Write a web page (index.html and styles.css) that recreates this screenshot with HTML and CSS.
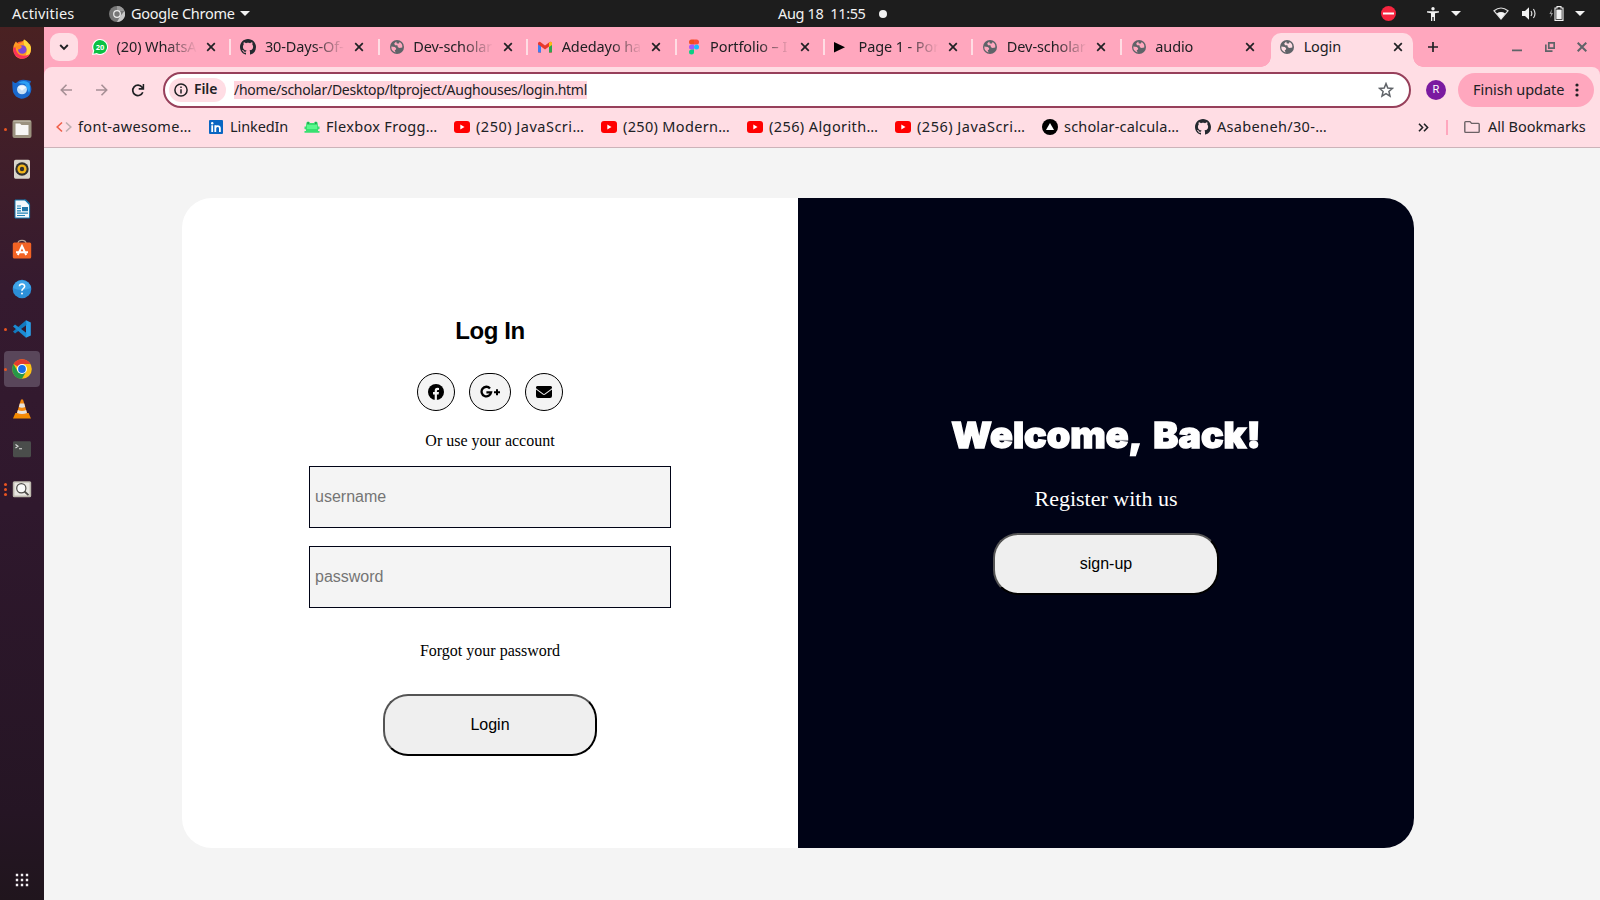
FILE: index.html
```html
<!DOCTYPE html>
<html lang="en">
<head>
<meta charset="utf-8">
<title>Login</title>
<link rel="stylesheet" href="styles.css">
</head>
<body>
<svg width="0" height="0" class="defs">
  <symbol id="globe" viewBox="0 0 14 14"><circle cx="7" cy="7" r="7" fill="#5f6368"/><path d="M6.2 1.4 4.2 3.6 5 5.3H7.4L7.9 7.2 9.6 8.1 12.3 7.6A5.7 5.7 0 0 0 9.6 2L9 3.4H6.8zM1.3 6.6 4.8 7l1.4 1.3-.4 1.5-1.1.5.9 2.2A5.8 5.8 0 0 1 1.3 6.6z" fill="#ffa7be"/></symbol>
  <symbol id="globe-light" viewBox="0 0 14 14"><circle cx="7" cy="7" r="7" fill="#5f6368"/><path d="M6.2 1.4 4.2 3.6 5 5.3H7.4L7.9 7.2 9.6 8.1 12.3 7.6A5.7 5.7 0 0 0 9.6 2L9 3.4H6.8zM1.3 6.6 4.8 7l1.4 1.3-.4 1.5-1.1.5.9 2.2A5.8 5.8 0 0 1 1.3 6.6z" fill="#ffdde4"/></symbol>
  <symbol id="github" viewBox="0 0 16 16"><path fill="#24292f" d="M8 0C3.58 0 0 3.58 0 8c0 3.54 2.29 6.53 5.47 7.59.4.07.55-.17.55-.38 0-.19-.01-.82-.01-1.49-2.01.37-2.53-.49-2.69-.94-.09-.23-.48-.94-.82-1.13-.28-.15-.68-.52-.01-.53.63-.01 1.08.58 1.23.82.72 1.21 1.87.87 2.33.66.07-.52.28-.87.51-1.07-1.78-.2-3.64-.89-3.64-3.95 0-.87.31-1.59.82-2.15-.08-.2-.36-1.02.08-2.12 0 0 .67-.21 2.2.82.64-.18 1.32-.27 2-.27s1.36.09 2 .27c1.53-1.04 2.2-.82 2.2-.82.44 1.1.16 1.92.08 2.12.51.56.82 1.27.82 2.15 0 3.07-1.87 3.75-3.65 3.95.29.25.54.73.54 1.48 0 1.07-.01 1.93-.01 2.2 0 .21.15.46.55.38A8.01 8.01 0 0 0 16 8c0-4.42-3.58-8-8-8z"/></symbol>
  <symbol id="close" viewBox="0 0 10 10"><path d="M1.2 1.2 8.8 8.8M8.8 1.2 1.2 8.8" stroke="#202124" stroke-width="1.7"/></symbol>
  <symbol id="youtube" viewBox="0 0 16 12"><rect width="16" height="12" rx="3" fill="#f00"/><path d="M6.3 3.5 10.5 6 6.3 8.5z" fill="#fff"/></symbol>
  <symbol id="caret" viewBox="0 0 10 5"><path d="M0 0H10L5 5z" fill="#f2f2f2"/></symbol>
</svg>

<header class="topbar">
  <span class="activities">Activities</span>
  <svg class="app-ico" width="16" height="16" viewBox="0 0 16 16"><circle cx="8" cy="8" r="8" fill="#777"/><path d="M8 0a8 8 0 0 1 7.5 5H8z" fill="#999"/><path d="M15.5 5A8 8 0 0 1 8 16l3.4-6z" fill="#c8c8c8"/><circle cx="8" cy="8" r="3.9" fill="#eee"/><circle cx="8" cy="8" r="2.7" fill="#777"/></svg>
  <span class="app-name">Google Chrome</span>
  <svg class="app-caret" width="10" height="5"><use href="#caret"/></svg>
  <span class="clock">Aug 18&nbsp; 11:55</span>
  <span class="notice"></span>
  <div class="tray">
    <svg class="dnd" width="15" height="15" viewBox="0 0 15 15"><circle cx="7.5" cy="7.5" r="7.5" fill="#f5253f"/><rect x="2" y="6.5" width="11" height="2" fill="#fff"/></svg>
    <svg class="person" width="12" height="14" viewBox="0 0 12 14"><circle cx="6" cy="1.8" r="1.7" fill="#f2f2f2"/><path d="M0 4.2H12V5.4L8 6.2V14H6.7V10H5.3V14H4V6.2L0 5.4z" fill="#f2f2f2"/></svg>
    <svg class="caret-a" width="10" height="5"><use href="#caret"/></svg>
    <svg class="wifi" width="16" height="13" viewBox="0 0 16 13"><path d="M1 3.8Q8-1.8 15 3.8L8 12z" fill="none" stroke="#ddd" stroke-width="1.2"/><path d="M3.8 6.4Q8 3.8 12.2 6.4L8 12z" fill="#f5f5f5"/></svg>
    <svg class="sound" width="15" height="13" viewBox="0 0 15 13"><path d="M0 4H3L7 .3V12.7L3 9H0z" fill="#f2f2f2"/><path d="M9 4Q10.6 6.5 9 9M11.4 2Q14.6 6.5 11.4 11" fill="none" stroke="#ddd" stroke-width="1.2"/></svg>
    <svg class="battery" width="15" height="15" viewBox="0 0 15 15"><path d="M3 3 .4 8H2.1L1.4 12 4 7H2.3z" fill="#999"/><path d="M6 2H8V.6H12V2H14V14.4H6z" fill="none" stroke="#f2f2f2" stroke-width="1.1"/><rect x="7.3" y="3.6" width="5.4" height="9.4" fill="#f2f2f2"/></svg>
    <svg width="10" height="5"><use href="#caret"/></svg>
  </div>
</header>

<div class="desktop">
<nav class="dock">
  <div class="app"><svg viewBox="0 0 20 20"><circle cx="10" cy="11" r="8.8" fill="#ff5a30"/><path d="M1.5 7Q3 3 4 2.5L6 5Q10 4 11 2L12 .5Q16 3 16 6L18 5Q20 12 17 16 13 20 8 19.5 1 17 1.5 7z" fill="#ff9a24"/><path d="M12 .5Q18 4 19 9 19 17 12 19 16 14 14 9 11 6 12 .5z" fill="#ffd83c"/><path d="M1.3 9Q1 18 9 19.7 15 20 18 15 13 18 8 16 4 14 3.5 8z" fill="#f9325c"/><circle cx="10.3" cy="10.5" r="4.3" fill="#7a48d8"/><path d="M3 7.5Q8 5 10 8L8 10 6 10.5z" fill="#ff8a20"/></svg></div>
  <div class="app"><svg viewBox="0 0 20 20"><path d="M.5 2Q2.5 4.5 4 4 8-.5 14 1L19 2 18 5Q21 11 17.5 16 13.5 20 9 19.7 3 18.5 1 13 0 6 .5 2z" fill="#1968cc"/><path d="M6 4Q12 0 17 4 19 9 17 14L13 5z" fill="#2da1f5"/><ellipse cx="10" cy="10.5" rx="5" ry="4.8" fill="#c5dff6"/><path d="M5.8 8.2 10 11.8 14.2 8.2Q10 5 5.8 8.2z" fill="#f2f8fd"/></svg></div>
  <div class="app run"><svg viewBox="0 0 20 20"><rect x=".5" y="1" width="19" height="18" rx="2" fill="#9b927f"/><rect x="1.4" y="1.8" width="17.2" height="1" fill="#bdb6a7"/><path d="M3.5 4.5H8L9.5 6H16.5V16H3.5z" fill="#f7f6f4"/></svg></div>
  <div class="app"><svg viewBox="0 0 20 20"><rect x="2" y=".7" width="16" height="19" rx="1.6" fill="#d9d5cc"/><circle cx="10" cy="10" r="6.7" fill="#303030"/><circle cx="10" cy="10" r="4.6" fill="#f1b51c"/><circle cx="10" cy="10" r="2.2" fill="#333"/></svg></div>
  <div class="app"><svg viewBox="0 0 20 20"><path d="M3 1H13L17.6 5.6V19H3z" fill="#f3f8fb" stroke="#1678ae" stroke-width="1"/><path d="M12 .6H14L18 4.6V7z" fill="#1678ae"/><path d="M5 7H9M5 9.4H9M5 11.8H9M5 14.2H16M5 16.5H13" stroke="#2283b6" stroke-width="1.2"/><rect x="10" y="8" width="6" height="4.2" fill="#2276a8"/></svg></div>
  <div class="app"><svg viewBox="0 0 20 20"><path d="M6 4.5Q6 1.3 10 1.3T14 4.5" fill="none" stroke="#b8a393" stroke-width="1.3"/><rect x=".8" y="3.5" width="18.4" height="16" rx="1.6" fill="#f26324"/><path d="M5.8 16 10 7 14.2 16M4 13.3H16" fill="none" stroke="#fff" stroke-width="2"/></svg></div>
  <div class="app"><svg viewBox="0 0 20 20"><circle cx="10" cy="10" r="9.3" fill="#2c8fd8"/><path d="M.9 9A9.2 9.2 0 0 1 19 9Q9 13 .9 9z" fill="#3fa4e8"/><path d="M7.4 7.2Q7.6 5 10 5T12.7 7.3Q12.7 8.6 11.2 9.6T10 12" fill="none" stroke="#fff" stroke-width="1.5"/><circle cx="10" cy="14.6" r="1" fill="#fff"/></svg></div>
  <div class="app run"><svg viewBox="0 0 20 20"><path d="M14 1.2 18.8 3.4V16.6L14 18.8z" fill="#2a9fe8"/><path d="M14 1.2 1 12.6 3 14.5 14.5 6z" fill="#1279be"/><path d="M14 18.8 1 7.4 3 5.5 14.5 14z" fill="#1b8bd2"/></svg></div>
  <div class="app run active"><svg viewBox="0 0 20 20"><circle cx="10" cy="10" r="9.8" fill="#fbc116"/><path d="M10 10 1.5 5.1A9.8 9.8 0 0 1 18.5 5.1H10z" fill="#e33b2e"/><path d="M1.5 5.1A9.8 9.8 0 0 0 10 19.8L14.2 12.5 10 10 5.8 12.5z" fill="#279847"/><circle cx="10" cy="10" r="5" fill="#fff"/><circle cx="10" cy="10" r="3.9" fill="#1a6fe8"/></svg></div>
  <div class="app"><svg viewBox="0 0 20 20"><path d="M3.4 14H16.6L19 19.6H1z" fill="#f48b00"/><path d="M9 .5H11L15.5 15.5Q10 18 4.5 15.5z" fill="#f58910"/><path d="M7.8 4.5H12.2L13.2 8Q10 9.3 6.8 8zM5.9 11Q10 12.8 14.1 11L15 14Q10 16 5 14z" fill="#e6e3df"/></svg></div>
  <div class="app"><svg viewBox="0 0 20 20"><rect x="1" y="2.2" width="18" height="16" rx="1.4" fill="#4a4d4b"/><path d="M3.5 5.5 6 7.3 3.5 9M7 9.8H10" fill="none" stroke="#ddd" stroke-width="1.1"/></svg></div>
  <div class="app run many"><svg viewBox="0 0 20 20"><rect x=".8" y="2.2" width="18.4" height="16" rx="1.5" fill="#bdb9ae"/><rect x="2.4" y="3.6" width="15.2" height="13" fill="#e9e7e2"/><circle cx="9.3" cy="9.2" r="4.6" fill="#f9f9f9" stroke="#4d4b48" stroke-width="1.2"/><path d="M12.5 12.5 16.5 16.2" stroke="#4d4b48" stroke-width="1.8"/></svg></div>
  <svg class="grid-ico" width="14" height="14" viewBox="0 0 14 14" fill="#f4f0f4"><path d="M.8.8h2.4v2.4H.8zM5.8.8h2.4v2.4H5.8zM10.8.8h2.4v2.4h-2.4zM.8 5.8h2.4v2.4H.8zM5.8 5.8h2.4v2.4H5.8zM10.8 5.8h2.4v2.4h-2.4zM.8 10.8h2.4v2.4H.8zM5.8 10.8h2.4v2.4H5.8zM10.8 10.8h2.4v2.4h-2.4z"/></svg>
</nav>

<div class="browser">
  <div class="tabstrip">
    <div class="tab-search"><svg width="10" height="7" viewBox="0 0 10 7"><path d="M1.2 1 5 4.9 8.8 1" fill="none" stroke="#202124" stroke-width="1.9"/></svg></div>
    <div class="tab"><svg class="fav" viewBox="0 0 16 16"><path d="M8 0a8 8 0 1 1-3.5 15.2L0 16l1-4.3A8 8 0 0 1 8 0z" fill="#fff"/><path d="M8 1.1a6.9 6.9 0 1 1-3.3 12.9l-3.2.7.8-3.1A6.9 6.9 0 0 1 8 1.1z" fill="#0ac143"/><text x="8" y="10.6" class="fav-num">20</text></svg><span class="title">(20) WhatsA</span><svg class="x"><use href="#close"/></svg></div>
    <div class="tab"><svg class="fav"><use href="#github"/></svg><span class="title">30-Days-Of-</span><svg class="x"><use href="#close"/></svg></div>
    <div class="tab"><svg class="fav small"><use href="#globe"/></svg><span class="title">Dev-scholar</span><svg class="x"><use href="#close"/></svg></div>
    <div class="tab"><svg class="fav small" viewBox="0 0 14 14"><path d="M0 3V12.4H3V6.5L7 9.5 11 6.5V12.4H14V3Q12.5 1 11 2.5L7 5.6 3 2.5Q1.5 1 0 3z" fill="#e9382c"/><path d="M0 4.5 3 6.6V12.4H1Q0 12.4 0 11.4z" fill="#3f7ff0"/><path d="M14 4.5 11 6.6V12.4H13Q14 12.4 14 11.4z" fill="#2ea44f"/><path d="M11 2.5Q13.5 1 14 3V5L11 7z" fill="#fcbb13"/></svg><span class="title">Adedayo ha</span><svg class="x"><use href="#close"/></svg></div>
    <div class="tab"><svg class="fav" viewBox="0 0 16 16"><path d="M8 .5H5.5a2.5 2.5 0 0 0 0 5H8z" fill="#f24e1e"/><path d="M8 .5h2.5a2.5 2.5 0 0 1 0 5H8z" fill="#ff4a38"/><path d="M8 5.5H5.5a2.5 2.5 0 0 0 0 5H8z" fill="#a259ff"/><circle cx="10.5" cy="8" r="2.5" fill="#1abcfe"/><path d="M8 10.5H5.5A2.5 2.5 0 1 0 8 13z" fill="#0acf83"/></svg><span class="title">Portfolio – I</span><svg class="x"><use href="#close"/></svg></div>
    <div class="tab"><svg class="fav" viewBox="0 0 16 16"><path d="M0 3 11 8.3 0 13.6z" fill="#000"/></svg><span class="title">Page 1 - Por</span><svg class="x"><use href="#close"/></svg></div>
    <div class="tab"><svg class="fav small"><use href="#globe"/></svg><span class="title">Dev-scholar</span><svg class="x"><use href="#close"/></svg></div>
    <div class="tab last"><svg class="fav small"><use href="#globe"/></svg><span class="title">audio</span><svg class="x"><use href="#close"/></svg></div>
    <div class="tab current"><svg class="fav small"><use href="#globe-light"/></svg><span class="title">Login</span><svg class="x"><use href="#close"/></svg></div>
    <svg class="plus" width="12" height="12" viewBox="0 0 12 12"><path d="M6 1V11M1 6H11" stroke="#202124" stroke-width="1.7"/></svg>
    <div class="win-controls">
      <svg width="10" height="10" viewBox="0 0 10 10"><path d="M0 9H10" stroke="#5f6368" stroke-width="2"/></svg>
      <svg width="10" height="10" viewBox="0 0 10 10"><path d="M3.8.8H9.2V6.2H3.8zM.8 2.5V9.2H7.5" fill="none" stroke="#5f6368" stroke-width="1.7"/></svg>
      <svg width="10" height="10" viewBox="0 0 10 10"><path d="M.7.7 9.3 9.3M9.3.7.7 9.3" stroke="#5f6368" stroke-width="2"/></svg>
    </div>
  </div>

  <div class="chrome">
    <div class="toolbar">
      <svg class="nav-btn" width="12" height="12" viewBox="0 0 12 12"><path d="M12 6H1.5M6.5.8 1.3 6 6.5 11.2" fill="none" stroke="#a68f95" stroke-width="1.6"/></svg>
      <svg class="nav-btn" width="12" height="12" viewBox="0 0 12 12"><path d="M0 6H10.5M5.5.8 10.7 6 5.5 11.2" fill="none" stroke="#a68f95" stroke-width="1.6"/></svg>
      <svg class="nav-btn reload" width="13" height="13" viewBox="0 0 13 13"><path d="M11.3 8.2A5.2 5.2 0 1 1 10.6 3.2L11.8 4.6M12 0V4.9H7.2" fill="none" stroke="#202124" stroke-width="1.7"/></svg>
      <div class="omnibox">
        <span class="chip"><svg width="14" height="14" viewBox="0 0 14 14"><circle cx="7" cy="7" r="6.1" fill="none" stroke="#202124" stroke-width="1.5"/><path d="M7 6.2V10.4M7 3.4V5" stroke="#202124" stroke-width="1.5"/></svg><b>File</b></span>
        <span class="url">/home/scholar/Desktop/ltproject/Aughouses/login.html</span>
        <svg class="star" width="16" height="16" viewBox="0 0 16 16"><path d="M8 1.6 9.8 6 14.5 6.4 10.9 9.5 12 14.1 8 11.6 4 14.1 5.1 9.5 1.5 6.4 6.2 6z" fill="none" stroke="#5f6368" stroke-width="1.5"/></svg>
      </div>
      <span class="avatar">R</span>
      <span class="update"><span class="update-text">Finish update</span><svg width="4" height="14" viewBox="0 0 4 14" fill="#202124"><circle cx="2" cy="2" r="1.6"/><circle cx="2" cy="7" r="1.6"/><circle cx="2" cy="12" r="1.6"/></svg></span>
    </div>
    <div class="bookmarks">
      <div class="bm w1"><svg viewBox="0 0 16 16"><path d="M6 3.5 1.2 8 6 12.5" fill="none" stroke="#f0604b" stroke-width="1.6"/><path d="M10 3.5 14.8 8 10 12.5" fill="none" stroke="#bdaeb0" stroke-width="1.6"/></svg><span>font-awesome…</span></div>
      <div class="bm w2"><svg viewBox="0 0 16 16"><rect x="1" y="1" width="14" height="14" rx="1" fill="#0a66c2"/><path d="M4.2 6.3V13M7.3 13V6.3M7.4 9.2Q7.6 7.2 9.7 7.2T11.9 9.4V13" fill="none" stroke="#fff" stroke-width="1.8"/><circle cx="4.2" cy="4.2" r="1.2" fill="#fff"/></svg><span>LinkedIn</span></div>
      <div class="bm w3"><svg viewBox="0 0 16 16"><path d="M2.2 5Q2.2 2.5 4 2.5T6 4H10Q10.2 2.5 12 2.5T13.8 5L14 7.5H15.5V10L14 10.5V12H15.5V13.8H.5V12H2V10.5L.5 10V7.5H2z" fill="#38e070"/><path d="M3 6H13V10H3z" fill="#5cf78d"/><circle cx="4.1" cy="4.1" r=".8" fill="#177a3b"/><circle cx="11.9" cy="4.1" r=".8" fill="#177a3b"/></svg><span>Flexbox Frogg…</span></div>
      <div class="bm w4"><svg viewBox="0 -2 16 16"><use href="#youtube" width="16" height="12"/></svg><span>(250) JavaScri…</span></div>
      <div class="bm w5"><svg viewBox="0 -2 16 16"><use href="#youtube" width="16" height="12"/></svg><span>(250) Modern…</span></div>
      <div class="bm w6"><svg viewBox="0 -2 16 16"><use href="#youtube" width="16" height="12"/></svg><span>(256) Algorith…</span></div>
      <div class="bm w7"><svg viewBox="0 -2 16 16"><use href="#youtube" width="16" height="12"/></svg><span>(256) JavaScri…</span></div>
      <div class="bm w8"><svg viewBox="0 0 16 16"><circle cx="8" cy="8" r="8" fill="#000"/><path d="M8 4 12 11H4z" fill="#fff"/></svg><span>scholar-calcula…</span></div>
      <div class="bm w9"><svg><use href="#github"/></svg><span>Asabeneh/30-…</span></div>
      <svg class="more" width="11" height="9" viewBox="0 0 11 9"><path d="M1 .7 4.6 4.5 1 8.3M6 .7 9.6 4.5 6 8.3" fill="none" stroke="#202124" stroke-width="1.6"/></svg>
      <i class="divider"></i>
      <div class="bm all"><svg viewBox="0 0 16 16"><path d="M.8 3.4Q.8 2.6 1.6 2.6H6L7.6 4.4H14.4Q15.2 4.4 15.2 5.2V12.6Q15.2 13.4 14.4 13.4H1.6Q.8 13.4 .8 12.6z" fill="none" stroke="#6b6165" stroke-width="1.4"/></svg><span>All Bookmarks</span></div>
    </div>
  </div>

  <main class="page">
    <div class="card">
      <section class="login">
        <h2>Log In</h2>
        <div class="social">
          <a><svg width="16" height="16" viewBox="0 0 16 16"><circle cx="8" cy="8" r="8"/><path d="M6.7 16V10.5H5V8H6.7V6.7Q6.7 3.7 9.4 3.7 10.3 3.7 11 3.9V6.1H10Q8.9 6.1 8.9 7.1V8H11L10.6 10.5H8.9V16z" fill="#f4f4f4"/></svg></a>
          <a><svg width="20" height="16" viewBox="0 0 20 16"><path d="M10 4.4A4.8 4.8 0 1 0 11.1 8.4H6.4" fill="none" stroke="#000" stroke-width="2.3"/><path d="M17 5.2V11.2M14 8.2H20" stroke="#000" stroke-width="2"/></svg></a>
          <a><svg width="16" height="16" viewBox="0 0 16 16"><path d="M1.5 2H14.5A1.5 1.5 0 0 1 15.4 4.7L8.6 9.8Q8 10.2 7.4 9.8L.6 4.7A1.5 1.5 0 0 1 1.5 2z"/><path d="M0 5.5 6.8 10.6Q8 11.4 9.2 10.6L16 5.5V12Q16 14 14 14H2Q0 14 0 12z"/></svg></a>
        </div>
        <p class="alt">Or use your account</p>
        <input type="text" placeholder="username">
        <input type="password" placeholder="password">
        <p class="forgot">Forgot your password</p>
        <button>Login</button>
      </section>
      <section class="welcome">
        <h1>Welcome, Back!</h1>
        <p>Register with us</p>
        <button>sign-up</button>
      </section>
    </div>
  </main>
</div>
</div>
</body>
</html>
```
FILE: styles.css
```css
* { box-sizing: border-box; }
body { margin: 0; width: 1600px; height: 900px; overflow: hidden; background: #f4f4f4; font-family: "Noto Sans", "Open Sans", sans-serif; font-size: 14.5px; color: #202124; }
svg { display: block; flex: none; }
.defs { position: absolute; }

.topbar { height: 27px; background: #1d1d1d; color: #f2f2f2; display: flex; align-items: center; padding: 0 15px 0 12px; white-space: nowrap; }
.topbar > span:not(.notice) { height: 22px; line-height: 20px; }
.activities { width: 97px; letter-spacing: .2px; }
.app-ico { margin-right: 6px; }
.app-name { width: 109px; letter-spacing: -.25px; }
.app-caret { margin-right: 528px; }
.clock { width: 101px; letter-spacing: -.35px; }
.notice { width: 8px; height: 8px; border-radius: 50%; background: #f2f2f2; }
.tray { margin-left: auto; display: flex; align-items: center; }
.dnd { margin-right: 31px; }
.person { margin-right: 12px; }
.caret-a { margin-right: 32px; }
.wifi { margin-right: 13px; }
.sound { margin-right: 12px; }
.battery { margin-right: 11px; }

.desktop { display: flex; height: 873px; }
.dock { width: 44px; flex: none; background: linear-gradient(#4a2122 0, #421f28 12%, #351a2f 30%, #2f182d 55%, #251524 90%, #20151d); display: flex; flex-direction: column; align-items: center; padding-top: 4px; }
.app { position: relative; width: 36px; height: 36px; margin-bottom: 4px; display: flex; align-items: center; justify-content: center; border-radius: 4px; }
.app svg { width: 20px; height: 20px; }
.app.active { background: #59465a; }
.app.run::before { content: ""; position: absolute; left: 0; top: 16.5px; width: 3px; height: 3px; border-radius: 50%; background: #e95420; }
.app.many::before { box-shadow: 0 -5px #e95420, 0 5px #e95420; }
.grid-ico { margin-top: auto; margin-bottom: 13px; }

.browser { width: 1556px; display: flex; flex-direction: column; background: #ffa7be; }
.tabstrip { height: 40px; flex: none; display: flex; align-items: center; padding: 0 13px 0 6px; position: relative; }
.tab-search { width: 28px; height: 28px; border-radius: 9px; background: #ffdde4; margin-right: 6px; display: flex; align-items: center; justify-content: center; }
.tab { width: 148.4px; height: 34px; flex: none; display: flex; align-items: center; padding-left: 8px; position: relative; }
.tab::after { content: ""; position: absolute; right: 1px; top: 9px; width: 2px; height: 16px; background: #ffdde4; }
.tab.last::after { display: none; }
.fav { width: 16px; height: 16px; margin-right: 8.5px; }
.fav.small { width: 14px; height: 14px; margin: 0 9.5px 0 1px; }
.fav-num { font: bold 7.5px "Open Sans", sans-serif; fill: #fff; text-anchor: middle; }
.title { width: 80px; white-space: nowrap; height: 24px; line-height: 22px; letter-spacing: -.1px; -webkit-mask-image: linear-gradient(90deg, #000 60%, transparent); mask-image: linear-gradient(90deg, #000 60%, transparent); }
.x { width: 10px; height: 10px; margin-left: 9.5px; }
.tab.current { width: 142px; align-self: flex-end; background: #ffdde4; border-radius: 10px 10px 0 0; }
.tab.current .x { margin-left: 9px; }
.tab.current .title { -webkit-mask-image: none; mask-image: none; }
.tab.current .title, .tab.current .fav, .tab.current .x { transform: translateY(-3px); }
.tab.current::before { content: ""; position: absolute; left: -10px; bottom: 0; width: 10px; height: 10px; background: radial-gradient(circle at 0 0, transparent 9.5px, #ffdde4 10px); }
.tab.current::after { right: -10px; top: auto; bottom: 0; width: 10px; height: 10px; background: radial-gradient(circle at 100% 0, transparent 9.5px, #ffdde4 10px); }
.plus { margin-left: 14px; }
.win-controls { margin-left: auto; display: flex; gap: 22.5px; }
.win-controls svg:first-child { transform: translateY(-.5px); }

.chrome { height: 81px; flex: none; background: #ffdde4; border-radius: 8px 8px 0 0; border-bottom: 1px solid #ccb3b9; }
.toolbar { display: flex; align-items: center; height: 46px; padding: 0 6px 0 16px; }
.nav-btn { margin-right: 24px; }
.reload { transform: translateX(-.5px); }
.omnibox { width: 1248px; height: 36px; background: #fff; border: 2px solid #97405b; border-radius: 18px; display: flex; align-items: center; padding-left: 4px; margin-left: -6px; }
.chip { width: 57px; height: 24px; border-radius: 12px; background: #ffdde4; display: flex; align-items: center; padding-left: 5px; margin-right: 8px; }
.chip b { margin-left: 6px; font-weight: 600; font-size: 14px; line-height: 20px; height: 22px; letter-spacing: -.1px; }
.url { line-height: 18px; background: #ffd4dd; letter-spacing: -.26px; white-space: nowrap; font-size: 14px; }
.star { margin-left: auto; margin-right: 15px; }
.avatar { width: 20px; height: 20px; border-radius: 50%; background: #7b1aa0; color: #fff; font: 11px/20px Roboto, sans-serif; text-align: center; margin-left: 15px; }
.update { width: 136px; height: 34px; border-radius: 17px; background: #ffa7be; margin-left: auto; display: flex; align-items: center; padding: 0 15px; justify-content: space-between; white-space: nowrap; }
.update-text { height: 22px; line-height: 20px; letter-spacing: -.05px; }
.bookmarks { display: flex; align-items: center; height: 28px; padding-left: 12px; }
.bm { display: flex; align-items: center; gap: 6px; white-space: nowrap; letter-spacing: .33px; }
.bm span { height: 22px; line-height: 20px; }
.bm svg { width: 16px; height: 16px; }
.w1 { width: 152px; } .w2 { width: 96px; letter-spacing: -.1px; } .w3 { width: 150px; } .w4 { width: 147px; letter-spacing: .5px; } .w5 { width: 146px; }
.w6 { width: 148px; letter-spacing: .4px; } .w7 { width: 147px; letter-spacing: .5px; } .w8 { width: 153px; letter-spacing: .18px; } .w9 { width: 223px; }
.divider { width: 2px; height: 15px; background: #ffa7be; margin: 0 16px 0 17px; }
.all { gap: 8px; letter-spacing: 0; }

.page { flex: 1; background: #f4f4f4; padding: 50px 0 0 138px; }
.card { width: 1232px; height: 650px; display: flex; border-radius: 30px; overflow: hidden; background: #fff; }
.login, .welcome { width: 616px; display: flex; flex-direction: column; align-items: center; }
.login { color: #000; padding-top: 119px; }
.login h2 { margin: 0; font: bold 24px/28px "Liberation Sans", sans-serif; letter-spacing: -.45px; }
.social { display: flex; gap: 14px; margin-top: 28px; }
.social a { height: 38px; padding: 0 10px; border: 1px solid #000; border-radius: 19px; background: #f4f4f4; display: flex; align-items: center; }
.alt, .forgot { margin: 0; font: 16px/18px "Liberation Serif", serif; }
.alt { margin-top: 21px; }
.login input { width: 362px; height: 62px; margin: 16px 0 2px; padding: 0 5px; border: 1px solid #000316; background: #f4f4f4; font: 16px "Liberation Sans", sans-serif; }
.forgot { margin-top: 32px; }
button { height: 62px; padding: 0; font: 16px "Liberation Sans", sans-serif; color: #000; background: #efefef; border: 2px outset #000; border-radius: 25px; }
.login button { width: 214px; margin-top: 34px; }
.login input + input { margin-top: 16px; }
.welcome { background: #000316; color: #fff; padding-top: 217px; }
.welcome h1 { margin: 0; font: 900 35.5px/42px Inter, sans-serif; -webkit-text-stroke: 1.3px #fff; white-space: nowrap; word-spacing: 5px; transform: scaleX(1.06); }
.welcome p { margin: 29px 0 0; font: 22px/26px "Liberation Serif", serif; }
.welcome button { width: 226px; margin-top: 21px; }
```
